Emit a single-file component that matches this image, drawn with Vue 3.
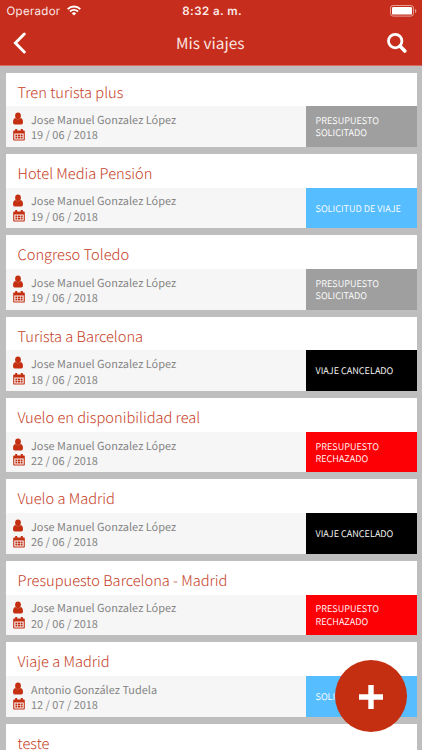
<script setup>
const jose = 'Jose Manuel Gonzalez López'
const trips = [
  { title: 'Tren turista plus', person: jose, date: '19 / 06 / 2018', status: 'PRESUPUESTO SOLICITADO', kind: 'requested' },
  { title: 'Hotel Media Pensión', person: jose, date: '19 / 06 / 2018', status: 'SOLICITUD DE VIAJE', kind: 'trip' },
  { title: 'Congreso Toledo', person: jose, date: '19 / 06 / 2018', status: 'PRESUPUESTO SOLICITADO', kind: 'requested' },
  { title: 'Turista a Barcelona', person: jose, date: '18 / 06 / 2018', status: 'VIAJE CANCELADO', kind: 'cancelled' },
  { title: 'Vuelo en disponibilidad real', person: jose, date: '22 / 06 / 2018', status: 'PRESUPUESTO RECHAZADO', kind: 'rejected' },
  { title: 'Vuelo a Madrid', person: jose, date: '26 / 06 / 2018', status: 'VIAJE CANCELADO', kind: 'cancelled' },
  { title: 'Presupuesto Barcelona - Madrid', person: jose, date: '20 / 06 / 2018', status: 'PRESUPUESTO RECHAZADO', kind: 'rejected' },
  { title: 'Viaje a Madrid', person: 'Antonio González Tudela', date: '12 / 07 / 2018', status: 'SOLICITUD DE VIAJE', kind: 'trip' },
  { title: 'teste' }
]
</script>

<template>
  <div class="screen">
    <header class="header">
      <div class="status-bar">
        <div class="carrier">
          <span>Operador</span>
          <svg class="wifi" viewBox="0 0 14 11" width="14" height="11">
            <g fill="none" stroke="#fff" stroke-width="1.9">
              <path d="M.7 4.1a8.9 8.9 0 0 1 12.6 0" />
              <path d="M3 6.5a5.7 5.7 0 0 1 8 0" />
            </g>
            <path d="M4.8 8.3a3.1 3.1 0 0 1 4.4 0L7 10.6z" fill="#fff" />
          </svg>
        </div>
        <div class="clock">8:32 a. m.</div>
        <svg class="battery" viewBox="0 0 27 12" width="27" height="12">
          <rect x=".5" y=".5" width="23" height="10.6" rx="2.6" fill="none" stroke="#e6a196" />
          <rect x="2" y="2" width="20" height="7.6" rx="1.2" fill="#fff" />
          <path d="M25 4v4q1.4-.6 1.4-2T25 4z" fill="#e6a196" />
        </svg>
      </div>
      <nav class="nav">
        <svg viewBox="0 0 14 22" width="14" height="22">
          <path d="M11.3 2 2.4 11l8.9 9" fill="none" stroke="#fff" stroke-width="2.9" stroke-linecap="round" />
        </svg>
        <h1>Mis viajes</h1>
        <svg viewBox="0 0 20 20" width="20" height="20">
          <circle cx="8.2" cy="8.1" r="6.7" fill="none" stroke="#fff" stroke-width="2.8" />
          <path d="m13.2 13.2 4.6 4.8" stroke="#fff" stroke-width="3.6" stroke-linecap="round" />
        </svg>
      </nav>
    </header>

    <main class="list">
      <article v-for="trip in trips" :key="trip.title" class="card">
        <h2>{{ trip.title }}</h2>
        <div v-if="trip.status" class="details">
          <div class="info">
            <div class="line">
              <svg viewBox="0 0 12 14" width="12" height="14">
                <ellipse cx="5" cy="3.8" rx="2.9" ry="3.4" />
                <path d="M2.2 6.1Q5 8.6 7.8 6.1 10 6.8 10 10.2 10 12.5 8.2 12.5H1.8Q0 12.5 0 10.2 0 6.8 2.2 6.1z" />
              </svg>
              <span>{{ trip.person }}</span>
            </div>
            <div class="line">
              <svg viewBox="0 0 12 12" width="12" height="12">
                <path fill-rule="evenodd" d="M1 1.6h10q.8 0 .8.8v8.4q0 .8-.8.8H1q-.8 0-.8-.8V2.4q0-.8.8-.8zm.3 3v5.9h9.4V4.6z" />
                <path d="M2.2 0h2v3.2h-2zM7.8 0h2v3.2h-2zM2.4 5.4h2v2H2.4zM5 5.4h2v2H5zM7.6 5.4h2v2H7.6zM2.4 7.9h2v1.7H2.4zM5 7.9h2v1.7H5zM7.6 7.9h2v1.7H7.6z" />
              </svg>
              <span>{{ trip.date }}</span>
            </div>
          </div>
          <div class="badge" :class="trip.kind"><span>{{ trip.status }}</span></div>
        </div>
      </article>
    </main>

    <button class="add" aria-label="Añadir viaje">
      <svg viewBox="0 0 24 24" width="24" height="24">
        <path d="M12 0v24M0 12h24" stroke="#fff" stroke-width="5.4" />
      </svg>
    </button>
  </div>
</template>

<style>
body {
  margin: 0;
  overflow: hidden;
}
</style>

<style scoped>
.screen {
  position: relative;
  width: 422px;
  height: 750px;
  overflow: hidden;
  background: #bebebe;
  font-family: "Noto Sans CJK SC", "Noto Sans", sans-serif;
  text-rendering: geometricPrecision;
}
.header {
  box-sizing: border-box;
  height: 66px;
  background: #c62d1c;
  border-bottom: 1px solid #d9695d;
  color: #fff;
}
.status-bar {
  display: grid;
  grid-template-columns: 1fr auto 1fr;
  align-items: center;
  height: 21px;
  padding: 0 5px 0 6.5px;
  font-family: Inter, Roboto, sans-serif;
  font-size: 11.5px;
  color: #fbeae8;
}
.carrier {
  display: flex;
  align-items: center;
  gap: 6px;
  letter-spacing: 0.3px;
}
.clock {
  font-weight: 600;
  letter-spacing: 0.45px;
  padding-left: 1px;
}
.battery {
  justify-self: end;
}
.nav {
  display: grid;
  grid-template-columns: 20px 1fr 20px;
  align-items: center;
  height: 44px;
  padding: 0 15px 0 12.5px;
}
h1 {
  margin: 0;
  padding-left: 1px;
  text-align: center;
  font-size: 15.4px;
  font-weight: 400;
  line-height: 24px;
  color: #fbe6e3;
}
.list {
  display: flex;
  flex-direction: column;
  gap: 7.1px;
  padding: 6.5px 5.5px 0;
}
.card {
  flex: none;
  height: 74.3px;
  background: #fff;
}
h2 {
  box-sizing: border-box;
  height: 33.7px;
  margin: 0;
  padding: 8px 12px 0;
  font-size: 14.65px;
  font-weight: 300;
  line-height: 23px;
  color: #c53d25;
}
.details {
  display: flex;
  height: 40.6px;
  background: #f6f6f6;
}
.info {
  flex: 1;
  padding: 5.3px 0 0 7.5px;
}
.line {
  display: flex;
  align-items: center;
  gap: 6px;
  height: 15.4px;
  font-size: 10.95px;
  line-height: 15px;
  color: #858585;
}
.line span {
  padding-top: 2.6px;
}
.line svg {
  flex: none;
  fill: #c42f12;
}
.badge {
  box-sizing: border-box;
  display: flex;
  align-items: center;
  width: 111px;
  padding: 0 10px;
  font-size: 9.15px;
  font-weight: 350;
  line-height: 12.5px;
  color: #fff;
}
.badge span {
  max-width: 90px;
}
.requested {
  background: #9f9f9f;
}
.trip {
  background: #56bdff;
}
.cancelled {
  background: #000;
}
.rejected {
  background: #fd0006;
}
.add {
  position: absolute;
  left: 335px;
  top: 660px;
  display: flex;
  align-items: center;
  justify-content: center;
  width: 72px;
  height: 72px;
  padding: 2px 0 0;
  border: 0;
  border-radius: 50%;
  background: #c42f12;
}
</style>
